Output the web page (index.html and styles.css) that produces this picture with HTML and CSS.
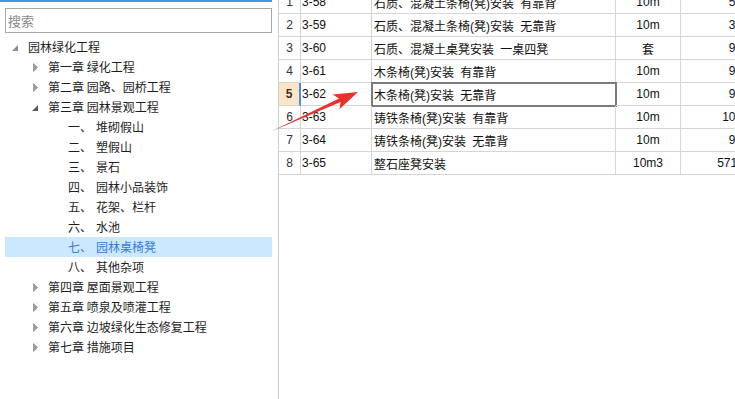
FILE: index.html
```html
<!DOCTYPE html>
<html lang="zh-CN">
    <head>
        <meta charset="UTF-8" />
        <meta name="viewport" content="width=device-width, initial-scale=1.0" />
        <title>定额库</title>
        <link rel="stylesheet" href="styles.css">
    </head>
    <body>
        <div class="app">
            <aside class="sidebar">
                <div class="topbar"></div>
                <div class="search"><span>搜索</span></div>

                <ul class="tree">
                    <li class="node lv0">
                        <span class="toggle open"><svg width="6" height="6"><path d="M6 0V6H0Z" fill="#8c8c8c"/></svg></span>
                        <span class="label">园林绿化工程</span>
                    </li>
                    <li class="node lv1">
                        <span class="toggle"><svg width="5" height="9"><path d="M0.5 0.5L4.5 4.5L0.5 8.5Z" fill="#9a9a9a" stroke="#808080" stroke-width="0.6"/></svg></span>
                        <span class="label">第一章 绿化工程</span>
                    </li>
                    <li class="node lv1">
                        <span class="toggle"><svg width="5" height="9"><path d="M0.5 0.5L4.5 4.5L0.5 8.5Z" fill="#9a9a9a" stroke="#808080" stroke-width="0.6"/></svg></span>
                        <span class="label">第二章 园路、园桥工程</span>
                    </li>
                    <li class="node lv1">
                        <span class="toggle open"><svg width="6" height="6"><path d="M6 0V6H0Z" fill="#5a5a5a"/></svg></span>
                        <span class="label">第三章 园林景观工程</span>
                    </li>
                    <li class="node lv2"><span class="toggle"></span><span class="num">一、</span><span class="label">堆砌假山</span></li>
                    <li class="node lv2"><span class="toggle"></span><span class="num">二、</span><span class="label">塑假山</span></li>
                    <li class="node lv2"><span class="toggle"></span><span class="num">三、</span><span class="label">景石</span></li>
                    <li class="node lv2"><span class="toggle"></span><span class="num">四、</span><span class="label">园林小品装饰</span></li>
                    <li class="node lv2"><span class="toggle"></span><span class="num">五、</span><span class="label">花架、栏杆</span></li>
                    <li class="node lv2"><span class="toggle"></span><span class="num">六、</span><span class="label">水池</span></li>
                    <li class="node lv2 selected"><span class="toggle"></span><span class="num">七、</span><span class="label">园林桌椅凳</span></li>
                    <li class="node lv2"><span class="toggle"></span><span class="num">八、</span><span class="label">其他杂项</span></li>
                    <li class="node lv1">
                        <span class="toggle"><svg width="5" height="9"><path d="M0.5 0.5L4.5 4.5L0.5 8.5Z" fill="#9a9a9a" stroke="#808080" stroke-width="0.6"/></svg></span>
                        <span class="label">第四章 屋面景观工程</span>
                    </li>
                    <li class="node lv1">
                        <span class="toggle"><svg width="5" height="9"><path d="M0.5 0.5L4.5 4.5L0.5 8.5Z" fill="#9a9a9a" stroke="#808080" stroke-width="0.6"/></svg></span>
                        <span class="label">第五章 喷泉及喷灌工程</span>
                    </li>
                    <li class="node lv1">
                        <span class="toggle"><svg width="5" height="9"><path d="M0.5 0.5L4.5 4.5L0.5 8.5Z" fill="#9a9a9a" stroke="#808080" stroke-width="0.6"/></svg></span>
                        <span class="label">第六章 边坡绿化生态修复工程</span>
                    </li>
                    <li class="node lv1">
                        <span class="toggle"><svg width="5" height="9"><path d="M0.5 0.5L4.5 4.5L0.5 8.5Z" fill="#9a9a9a" stroke="#808080" stroke-width="0.6"/></svg></span>
                        <span class="label">第七章 措施项目</span>
                    </li>
                </ul>
            </aside>

            <main class="grid-pane">
                <div class="grid">
                    <div class="row">
                        <div class="cell c-head">1</div>
                        <div class="cell c-code">3-58</div>
                        <div class="cell c-name">石质、混凝土条椅(凳)安装 有靠背</div>
                        <div class="cell c-unit">10m</div>
                        <div class="cell c-qty">54</div>
                    </div>
                    <div class="row">
                        <div class="cell c-head">2</div>
                        <div class="cell c-code">3-59</div>
                        <div class="cell c-name">石质、混凝土条椅(凳)安装 无靠背</div>
                        <div class="cell c-unit">10m</div>
                        <div class="cell c-qty">38</div>
                    </div>
                    <div class="row">
                        <div class="cell c-head">3</div>
                        <div class="cell c-code">3-60</div>
                        <div class="cell c-name">石质、混凝土桌凳安装 一桌四凳</div>
                        <div class="cell c-unit">套</div>
                        <div class="cell c-qty">95</div>
                    </div>
                    <div class="row">
                        <div class="cell c-head">4</div>
                        <div class="cell c-code">3-61</div>
                        <div class="cell c-name">木条椅(凳)安装 有靠背</div>
                        <div class="cell c-unit">10m</div>
                        <div class="cell c-qty">95</div>
                    </div>
                    <div class="row active">
                        <div class="cell c-head">5</div>
                        <div class="cell c-code">3-62</div>
                        <div class="cell c-name current">木条椅(凳)安装 无靠背</div>
                        <div class="cell c-unit">10m</div>
                        <div class="cell c-qty">92</div>
                    </div>
                    <div class="row">
                        <div class="cell c-head">6</div>
                        <div class="cell c-code">3-63</div>
                        <div class="cell c-name">铸铁条椅(凳)安装 有靠背</div>
                        <div class="cell c-unit">10m</div>
                        <div class="cell c-qty">1006</div>
                    </div>
                    <div class="row">
                        <div class="cell c-head">7</div>
                        <div class="cell c-code">3-64</div>
                        <div class="cell c-name">铸铁条椅(凳)安装 无靠背</div>
                        <div class="cell c-unit">10m</div>
                        <div class="cell c-qty">97</div>
                    </div>
                    <div class="row">
                        <div class="cell c-head">8</div>
                        <div class="cell c-code">3-65</div>
                        <div class="cell c-name">整石座凳安装</div>
                        <div class="cell c-unit">10m3</div>
                        <div class="cell c-qty">571.34</div>
                    </div>
                </div>
            </main>

            <!-- 截图标注箭头 -->
            <svg class="annot" width="735" height="399">
                <polygon points="271,131.5 340.6,102.1 339.4,109.2 358,92 332.8,94.6 339,98.5" fill="#e8322b"/>
            </svg>
        </div>
    </body>
</html>
```

FILE: styles.css
```css
body {
    margin: 0;
    background: #fff;
    font-family: "Noto Sans CJK SC", sans-serif;
    font-size: 12px;
    color: #1e1e1e;
    overflow: hidden;
}

.app {
    position: relative;
    display: flex;
    height: 399px;
}

/* 左侧树 */
.sidebar {
    width: 278px;
    flex: none;
}

.topbar {
    width: 272px;
    height: 2px;
    background: #4393e6;
}

.search {
    display: flex;
    align-items: center;
    box-sizing: border-box;
    width: 267px;
    height: 25px;
    margin: 6px 0 0 5px;
    padding-left: 2px;
    border: 1px solid #a8a8a8;
    color: #8a8a8a;
    font-size: 13px;
}

.tree {
    list-style: none;
    width: 267px;
    margin: 4px 0 0 5px;
    padding: 0;
}

.node {
    display: flex;
    align-items: center;
    height: 20px;
    line-height: 20px;
    white-space: nowrap;
}

.lv0 {
    padding-left: 3px;
}

.lv1 {
    padding-left: 23px;
}

.lv2 {
    padding-left: 43px;
}

.toggle {
    display: flex;
    align-items: center;
    flex: none;
    width: 20px;
    height: 20px;
}

.toggle svg {
    margin-left: 5px;
}

.toggle.open svg {
    margin-left: 4px;
    margin-top: 2px;
}

.num {
    margin-right: 4px;
}

.node.selected {
    background: #cce8ff;
    color: #3a7dd4;
}

/* 右侧表格 */
.grid-pane {
    flex: 1;
    border-left: 1px solid #cdcdcd;
    overflow: hidden;
}

.grid {
    width: max-content;
    margin-top: -9px;
}

.row {
    display: flex;
    height: 23px;
}

.cell {
    display: flex;
    align-items: center;
    box-sizing: border-box;
    height: 23px;
    border-right: 1px solid #d6d6d6;
    border-bottom: 1px solid #d6d6d6;
    white-space: nowrap;
    overflow: hidden;
    font-family: "Liberation Sans", "Noto Sans CJK SC", sans-serif;
    font-size: 12px;
    color: #111;
}

.c-head {
    width: 22px;
    justify-content: center;
    color: #333;
}

.c-code {
    width: 71px;
    padding-left: 1px;
}

.c-name {
    width: 244px;
    padding-left: 2px;
    word-spacing: 3px;
}

.c-unit {
    width: 65px;
    justify-content: center;
}

.c-qty {
    width: 110px;
    justify-content: center;
}

.row.active .c-head {
    background: #fde4c4;
    border-right: 2px solid #4a90e2;
    font-weight: bold;
}

.cell.current {
    outline: 2px solid #7b7b7b;
    outline-offset: -1px;
}

.annot {
    position: absolute;
    top: 0;
    left: 0;
    pointer-events: none;
}
```
